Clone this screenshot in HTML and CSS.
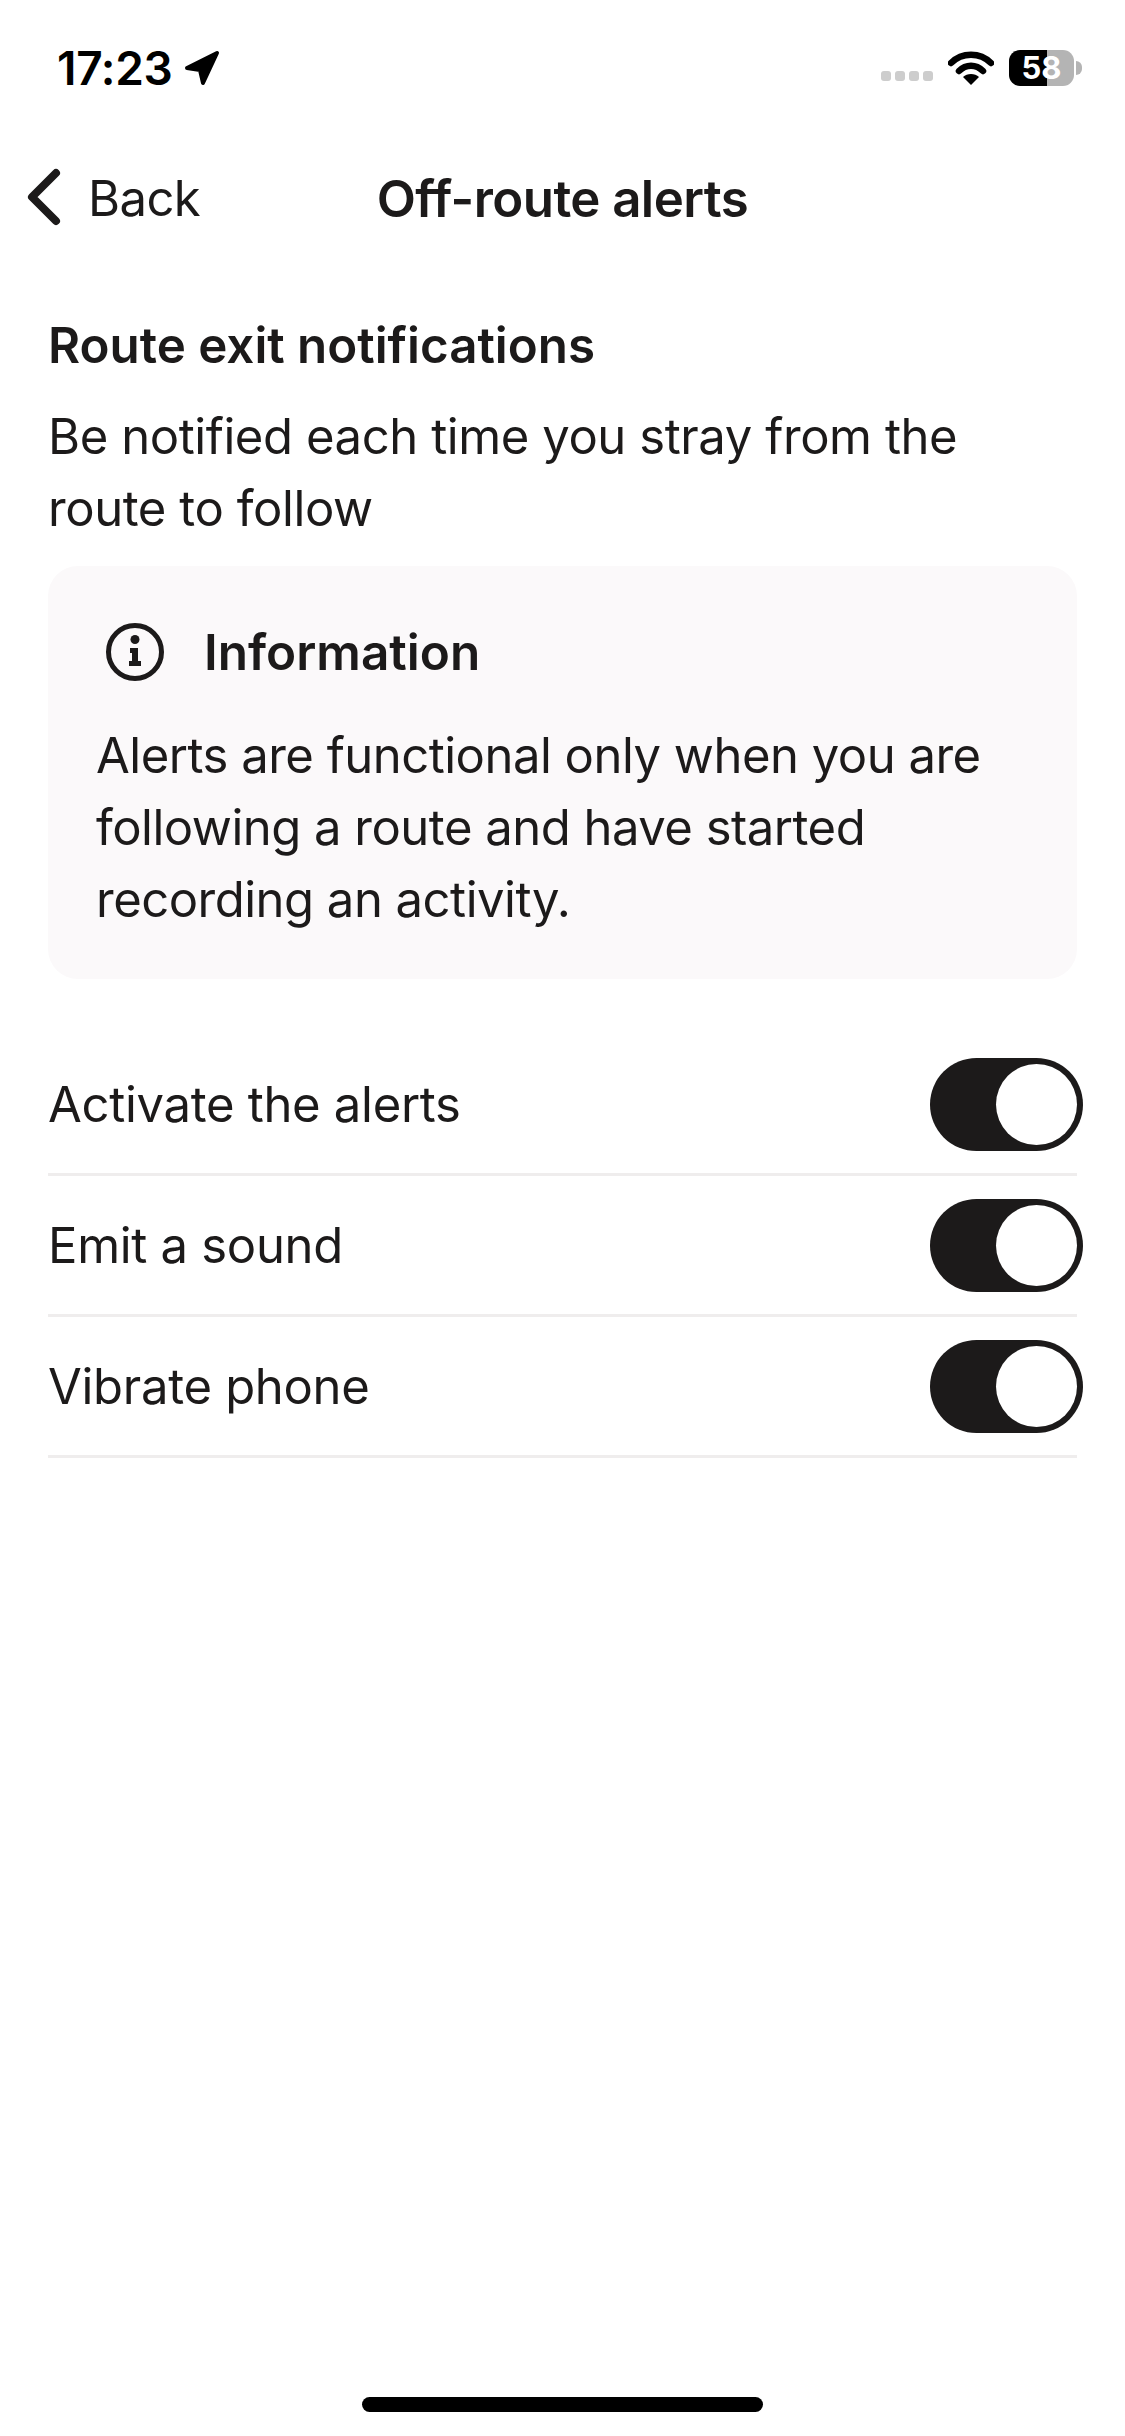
FILE: index.html
```html
<!DOCTYPE html>
<html lang="en">
<head>
    <meta charset="UTF-8">
    <meta name="viewport" content="width=device-width, initial-scale=1.0">
    <title>Off-route alerts</title>
    <link rel="stylesheet" href="styles.css">
</head>
<body>
    <div class="page">
        <!-- Status bar -->
        <div class="status-bar">
            <div class="status-left">
                <span class="time">17:23</span>
                <svg class="location" width="36" height="36" viewBox="0 0 36 36">
                    <path d="M3 18 L33 3 L19 33 L16 20 Z" fill="#000" stroke="#000" stroke-width="4" stroke-linejoin="round"/>
                </svg>
            </div>
            <div class="status-right">
                <div class="signal">
                    <span class="dot"></span><span class="dot"></span><span class="dot"></span><span class="dot"></span>
                </div>
                <svg class="wifi" width="46" height="34" viewBox="0 0 46 34">
                    <path d="M3 12 C14 1 32 1 43 12" fill="none" stroke="#000" stroke-width="6.5" stroke-linecap="round"/>
                    <path d="M11 20 C18 13 28 13 35 20" fill="none" stroke="#000" stroke-width="6.5" stroke-linecap="round"/>
                    <path d="M23 34 L15 26 C19 22 27 22 31 26 Z" fill="#000"/>
                </svg>
                <div class="battery">
                    <div class="battery-body">58</div>
                    <div class="battery-tip"></div>
                </div>
            </div>
        </div>

        <!-- Navigation -->
        <header class="nav">
            <a class="back" href="#">
                <svg width="38" height="60" viewBox="0 0 38 60">
                    <path d="M32 5 L8 29 L32 53" fill="none" stroke="#1c1a1a" stroke-width="8" stroke-linecap="round" stroke-linejoin="round"/>
                </svg>
                <span>Back</span>
            </a>
            <h1 class="nav-title">Off-route alerts</h1>
        </header>

        <main class="content">
            <h2 class="section-title">Route exit notifications</h2>
            <p class="section-text">Be notified each time you stray from the route to follow</p>

            <section class="info-card">
                <div class="info-head">
                    <svg width="60" height="60" viewBox="0 0 60 60">
                        <circle cx="30" cy="30" r="26.5" fill="none" stroke="#1c1a1a" stroke-width="5"/>
                        <circle cx="30" cy="17.5" r="4.5" fill="#1c1a1a"/>
                        <path d="M25 26 H33 V39 H36 V44 H24 V39 H27 V31 H25 Z" fill="#1c1a1a"/>
                    </svg>
                    <h3 class="info-title">Information</h3>
                </div>
                <p class="info-text">Alerts are functional only when you are following a route and have started recording an activity.</p>
            </section>

            <div class="settings">
                <div class="row">
                    <span>Activate the alerts</span>
                    <span class="toggle"><span class="knob"></span></span>
                </div>
                <div class="row">
                    <span>Emit a sound</span>
                    <span class="toggle"><span class="knob"></span></span>
                </div>
                <div class="row">
                    <span>Vibrate phone</span>
                    <span class="toggle"><span class="knob"></span></span>
                </div>
            </div>
        </main>

        <div class="home-bar"><span class="home-indicator"></span></div>
    </div>
</body>
</html>
```

FILE: styles.css
```css
/* Global */
body {
    margin: 0;
    padding: 0;
    background-color: #fff;
    color: #1c1a1a;
    font-family: Inter, "Liberation Sans", sans-serif;
}

.page {
    display: flex;
    flex-direction: column;
    height: 2436px;
    overflow: hidden;
}

/* Status bar */
.status-bar {
    display: flex;
    justify-content: space-between;
    align-items: center;
    height: 136px;
    padding: 0 43px 0 57px;
    box-sizing: border-box;
}

.status-left {
    display: flex;
    align-items: center;
    gap: 11px;
}

.time {
    font-size: 46px;
    font-weight: 600;
    color: #000;
    letter-spacing: -0.3px;
}

.status-right {
    display: flex;
    align-items: center;
}

.signal {
    display: flex;
    gap: 4px;
    margin: 16px 15px 0 0;
}

.dot {
    width: 10px;
    height: 10px;
    border-radius: 3px;
    background-color: #cdcdcd;
}

.wifi {
    margin-right: 15px;
}

.battery {
    display: flex;
    align-items: center;
    gap: 2px;
}

.battery-body {
    width: 65px;
    height: 36px;
    border-radius: 11px;
    background: linear-gradient(90deg, #000 58%, #b4b4b4 58%);
    color: #fff;
    font-size: 31px;
    font-weight: 700;
    line-height: 36px;
    text-align: center;
}

.battery-tip {
    width: 6px;
    height: 14px;
    border-radius: 0 7px 7px 0;
    background-color: #b4b4b4;
}

/* Navigation */
.nav {
    display: flex;
    justify-content: center;
    align-items: center;
    position: relative;
    height: 124px;
}

.back {
    position: absolute;
    left: 24px;
    top: 32px;
    display: flex;
    align-items: center;
    gap: 26px;
    color: #1c1a1a;
    font-size: 49px;
    letter-spacing: -0.6px;
    text-decoration: none;
}

.nav-title {
    margin: 0;
    font-size: 51px;
    font-weight: 600;
    letter-spacing: -0.58px;
}

/* Content */
.content {
    flex: 1;
    padding: 0 48px;
}

.section-title {
    margin: 50px 0 0;
    font-size: 49.3px;
    font-weight: 600;
    line-height: 70px;
}

.section-text {
    margin: 21px 0 0;
    font-size: 49px;
    line-height: 72px;
    letter-spacing: -0.42px;
}

.info-card {
    margin-top: 21px;
    padding: 56px 48px 43px;
    background-color: #fbf9fa;
    border-radius: 30px;
}

.info-head {
    display: flex;
    align-items: center;
    gap: 39px;
    padding-left: 9px;
}

.info-title {
    margin: 0;
    font-size: 49.5px;
    font-weight: 600;
}

.info-text {
    margin: 38px 0 0;
    font-size: 49px;
    line-height: 72px;
    letter-spacing: -0.5px;
}

/* Settings rows */
.settings {
    margin-top: 56px;
}

.row {
    display: flex;
    justify-content: space-between;
    align-items: center;
    height: 141px;
    box-sizing: border-box;
    border-bottom: 3px solid #efeded;
    font-size: 49px;
    letter-spacing: -0.3px;
}

.toggle {
    display: flex;
    justify-content: flex-end;
    align-items: center;
    width: 153px;
    height: 93px;
    margin-right: -6px;
    padding-right: 6px;
    box-sizing: border-box;
    border-radius: 47px;
    background-color: #1c1a1a;
}

.knob {
    width: 81px;
    height: 81px;
    border-radius: 50%;
    background-color: #fff;
}

/* Home indicator */
.home-bar {
    display: flex;
    justify-content: center;
    padding-bottom: 24px;
}

.home-indicator {
    width: 401px;
    height: 15px;
    border-radius: 8px;
    background-color: #000;
}
```
